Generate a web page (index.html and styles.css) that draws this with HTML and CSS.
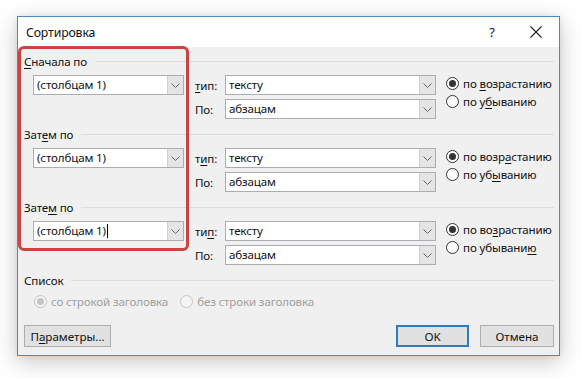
FILE: index.html
```html
<!DOCTYPE html>
<html lang="ru">
<head>
<meta charset="utf-8">
<title>Сортировка</title>
<link rel="stylesheet" href="styles.css">
</head>
<body>
<div class="dialog">
  <div class="titlebar">
    <span class="title">Сортировка</span>
    <span class="help">?</span>
    <span class="close"><svg width="12" height="12" viewBox="0 0 12 12"><path d="M0.5 0.5 L11.5 11.5 M11.5 0.5 L0.5 11.5" stroke="#222" stroke-width="1.1" fill="none"/></svg></span>
  </div>
  <div class="content">
    <section class="group">
      <div class="legend"><span><u>С</u>начала по</span></div>
      <div class="group-row">
        <div class="combo key"><span class="val">(столбцам 1)</span><span class="arrow"><svg width="9" height="5" viewBox="0 0 9 5"><path d="M0.5 0.5 L4.5 4.5 L8.5 0.5" stroke="#666" fill="none"/></svg></span></div>
        <div class="fields">
          <div class="field-row"><span class="flabel"><u>т</u>ип:</span><div class="combo wide"><span class="val">тексту</span><span class="arrow"><svg width="9" height="5" viewBox="0 0 9 5"><path d="M0.5 0.5 L4.5 4.5 L8.5 0.5" stroke="#666" fill="none"/></svg></span></div></div>
          <div class="field-row"><span class="flabel">По:</span><div class="combo wide"><span class="val">абзацам</span><span class="arrow"><svg width="9" height="5" viewBox="0 0 9 5"><path d="M0.5 0.5 L4.5 4.5 L8.5 0.5" stroke="#666" fill="none"/></svg></span></div></div>
        </div>
        <div class="radios">
          <div class="radio"><span class="circle checked"></span><span>по <u>в</u>озрастанию</span></div>
          <div class="radio"><span class="circle"></span><span>по у<u>б</u>ыванию</span></div>
        </div>
      </div>
    </section>

    <section class="group">
      <div class="legend"><span>Зат<u>е</u>м по</span></div>
      <div class="group-row">
        <div class="combo key"><span class="val">(столбцам 1)</span><span class="arrow"><svg width="9" height="5" viewBox="0 0 9 5"><path d="M0.5 0.5 L4.5 4.5 L8.5 0.5" stroke="#666" fill="none"/></svg></span></div>
        <div class="fields">
          <div class="field-row"><span class="flabel">т<u>и</u>п:</span><div class="combo wide"><span class="val">тексту</span><span class="arrow"><svg width="9" height="5" viewBox="0 0 9 5"><path d="M0.5 0.5 L4.5 4.5 L8.5 0.5" stroke="#666" fill="none"/></svg></span></div></div>
          <div class="field-row"><span class="flabel">По:</span><div class="combo wide"><span class="val">абзацам</span><span class="arrow"><svg width="9" height="5" viewBox="0 0 9 5"><path d="M0.5 0.5 L4.5 4.5 L8.5 0.5" stroke="#666" fill="none"/></svg></span></div></div>
        </div>
        <div class="radios">
          <div class="radio"><span class="circle checked"></span><span>по возр<u>а</u>станию</span></div>
          <div class="radio"><span class="circle"></span><span>по уб<u>ы</u>ванию</span></div>
        </div>
      </div>
    </section>

    <section class="group">
      <div class="legend"><span>Зате<u>м</u> по</span></div>
      <div class="group-row">
        <div class="combo key"><span class="val">(столбцам 1)<span class="caret"></span></span><span class="arrow"><svg width="9" height="5" viewBox="0 0 9 5"><path d="M0.5 0.5 L4.5 4.5 L8.5 0.5" stroke="#666" fill="none"/></svg></span></div>
        <div class="fields">
          <div class="field-row"><span class="flabel">ти<u>п</u>:</span><div class="combo wide"><span class="val">тексту</span><span class="arrow"><svg width="9" height="5" viewBox="0 0 9 5"><path d="M0.5 0.5 L4.5 4.5 L8.5 0.5" stroke="#666" fill="none"/></svg></span></div></div>
          <div class="field-row"><span class="flabel">По:</span><div class="combo wide"><span class="val">абзацам</span><span class="arrow"><svg width="9" height="5" viewBox="0 0 9 5"><path d="M0.5 0.5 L4.5 4.5 L8.5 0.5" stroke="#666" fill="none"/></svg></span></div></div>
        </div>
        <div class="radios">
          <div class="radio"><span class="circle checked"></span><span>по во<u>з</u>растанию</span></div>
          <div class="radio"><span class="circle"></span><span>по убывани<u>ю</u></span></div>
        </div>
      </div>
    </section>

    <section class="list">
      <div class="legend"><span>Список</span></div>
      <div class="list-row">
        <div class="radio disabled"><span class="circle checked"></span><span>со строкой заголовка</span></div>
        <div class="radio disabled"><span class="circle"></span><span>без строки заголовка</span></div>
      </div>
    </section>

    <div class="buttons">
      <button class="btn params">П<u>а</u>раметры...</button>
      <span class="spacer"></span>
      <button class="btn ok">OK</button>
      <button class="btn cancel">Отмена</button>
    </div>
  </div>
  <div class="highlight"></div>
</div>
</body>
</html>
```

FILE: styles.css
```css
* { box-sizing: border-box; }
html, body { margin: 0; padding: 0; background: #ffffff; }
body {
  font-family: "Noto Sans", "Open Sans", "DejaVu Sans", sans-serif;
  font-size: 11.6px;
  letter-spacing: -0.15px;
  color: #111;
  padding: 16px 0 0 17px;
  width: 581px;
  height: 378px;
  overflow: hidden;
}
u { text-decoration-thickness: 1px; text-underline-offset: 2px; }

.dialog {
  position: relative;
  width: 543px;
  height: 340px;
  border: 1px solid #4a8cc2;
  background: #f0f0f0;
  box-shadow: 0 6px 22px rgba(0, 0, 0, 0.22), 0 0 6px rgba(0, 0, 0, 0.08);
  display: flex;
  flex-direction: column;
}

.titlebar {
  height: 30px;
  background: #ffffff;
  display: flex;
  align-items: center;
  padding-left: 8px;
  font-size: 12.3px;
}
.title { flex: 1; }
.help { width: 20px; text-align: center; margin-right: 28px; font-size: 13px; }
.close { width: 12px; height: 12px; margin-right: 17px; display: flex; }

.content {
  flex: 1;
  padding: 7px 5px 0 6px;
  display: flex;
  flex-direction: column;
}

.legend {
  height: 16px;
  display: flex;
  align-items: center;
  line-height: 16px;
}
.legend::after {
  content: "";
  flex: 1;
  height: 1px;
  background: #dcdcdc;
  margin-left: 8px;
  margin-top: -1px;
}

.group { margin-bottom: 8px; }
.group-row {
  display: flex;
  align-items: flex-start;
  margin-top: 5px;
}

.combo {
  height: 20px;
  background: #fff;
  border: 1px solid #abadb3;
  display: flex;
  align-items: stretch;
}
.combo .val {
  flex: 1;
  padding-left: 3px;
  line-height: 18px;
  white-space: nowrap;
  display: flex;
  align-items: center;
}
.combo .arrow {
  width: 16px;
  background: #e5e5e5;
  border-left: 1px solid #cfcfcf;
  display: flex;
  align-items: center;
  justify-content: center;
}
.combo.key { width: 151px; margin-left: 9px; }
.combo.wide { width: 211px; }
.caret {
  display: inline-block;
  width: 1px;
  height: 14px;
  background: #000;
  margin-left: 1px;
}

.fields {
  margin-left: 11px;
  display: flex;
  flex-direction: column;
  gap: 4px;
}
.field-row { display: flex; align-items: center; }
.flabel { width: 30px; }

.radios {
  margin-left: 10px;
  margin-top: -1px;
  display: flex;
  flex-direction: column;
}
.radio {
  height: 18px;
  display: flex;
  align-items: center;
  white-space: nowrap;
}
.circle {
  width: 13px;
  height: 13px;
  border-radius: 50%;
  border: 1px solid #333;
  background: #fff;
  margin-right: 4px;
  position: relative;
  flex: none;
}
.circle.checked::after {
  content: "";
  position: absolute;
  left: 2px;
  top: 2px;
  width: 7px;
  height: 7px;
  border-radius: 50%;
  background: #333;
}
.radio.disabled { color: #a0a0a0; }
.radio.disabled .circle { border-color: #c4c4c4; background: #f4f4f4; }
.radio.disabled .circle.checked::after { background: #c4c4c4; }

.list-row {
  display: flex;
  margin-top: 3px;
  padding-left: 10px;
  gap: 12px;
}

.buttons {
  display: flex;
  margin-top: 15px;
  gap: 11px;
}
.spacer { flex: 1; }
.btn {
  font: inherit;
  color: #111;
  height: 22px;
  background: #e1e1e1;
  border: 1px solid #adadad;
  padding: 0;
  border-radius: 0;
}
.btn.params { width: 87px; }
.btn.ok { width: 73px; border: 2px solid #2f7cc2; }
.btn.cancel { width: 74px; }

.highlight {
  position: absolute;
  left: 0;
  top: 29px;
  width: 171px;
  height: 205px;
  border: 3px solid #cc4440;
  border-radius: 6px;
  pointer-events: none;
}
```
